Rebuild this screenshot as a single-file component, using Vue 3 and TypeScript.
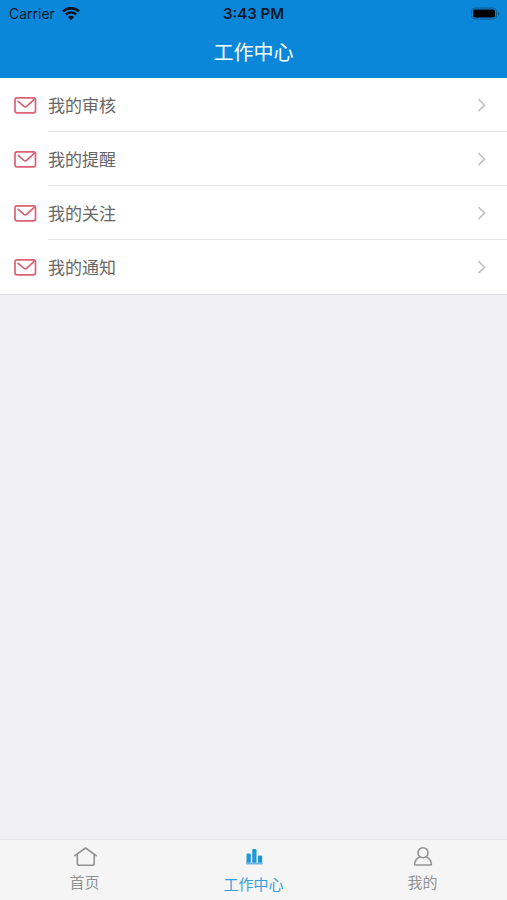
<script setup lang="ts">
import { ref } from 'vue'

interface MenuItem {
  id: string
  label: string
}

interface Tab {
  id: 'home' | 'work' | 'mine'
  label: string
}

const items: MenuItem[] = [
  { id: 'review', label: '我的审核' },
  { id: 'remind', label: '我的提醒' },
  { id: 'follow', label: '我的关注' },
  { id: 'notice', label: '我的通知' },
]

const tabs: Tab[] = [
  { id: 'home', label: '首页' },
  { id: 'work', label: '工作中心' },
  { id: 'mine', label: '我的' },
]

const active = ref<Tab['id']>('work')
</script>

<template>
  <div class="page">
    <header class="header">
      <div class="status">
        <div class="carrier">
          <span>Carrier</span>
          <svg class="wifi" viewBox="0 0 18 14" width="18" height="14" aria-hidden="true">
            <path d="M1 4.400C5.600 .1 12.400 .1 17 4.400" />
            <path d="M3.900 7.500C6.900 4.700 11.100 4.700 14.100 7.500" />
            <path class="dot" d="M9 13.200 5.900 10C7.700 8.400 10.300 8.400 12.100 10Z" />
          </svg>
        </div>
        <span class="time">3:43 PM</span>
        <svg class="battery" viewBox="0 0 30 14" width="30" height="14" aria-hidden="true">
          <rect class="shell" x="1.500" y="1" width="25" height="11" rx="3.500" />
          <rect x="3" y="2.500" width="22" height="8" rx="2" />
          <path class="cap" d="M28 4.500C29.700 5 29.700 8 28 8.500Z" />
        </svg>
      </div>
      <h1 class="title">工作中心</h1>
    </header>

    <main class="content">
      <ul class="list">
        <li v-for="item in items" :key="item.id">
          <button type="button" class="row">
            <svg class="mail" viewBox="0 0 24 18" width="24" height="18" aria-hidden="true">
              <rect x="2" y="1.800" width="20.500" height="15" rx="2" />
              <path d="M5.200 5.400 11 10.400Q12.300 11.400 13.600 10.400L21.700 2.800" />
            </svg>
            <span class="cell">
              <span>{{ item.label }}</span>
              <svg class="chevron" viewBox="0 0 10 14" width="10" height="14" aria-hidden="true">
                <path d="M1.500 1.200 7.500 7.200 1.500 13.200" />
              </svg>
            </span>
          </button>
        </li>
      </ul>
    </main>

    <nav class="tabs">
      <button
        v-for="tab in tabs"
        :key="tab.id"
        type="button"
        class="tab"
        :class="{ active: tab.id === active }"
        @click="active = tab.id"
      >
        <svg v-if="tab.id === 'home'" class="icon" viewBox="0 0 24 22" width="24" height="22" aria-hidden="true">
          <path d="M1.800 10.600 12.500 3 23.200 10.600" />
          <path d="M4.300 9.200V18.200Q4.300 20.200 6.300 20.200H19.200Q21.200 20.200 21.200 18.200V9.200" />
        </svg>
        <svg v-else-if="tab.id === 'work'" class="icon solid" viewBox="0 0 24 22" width="24" height="22" aria-hidden="true">
          <rect x="4.500" y="7.500" width="4.300" height="9.500" rx="1.200" />
          <rect x="10.200" y="3" width="4.300" height="14" rx="1.200" />
          <rect x="15.900" y="9.500" width="4.300" height="7.500" rx="1.200" />
          <rect class="base" x="4" y="16.500" width="16.800" height="2" />
        </svg>
        <svg v-else class="icon" viewBox="0 0 24 22" width="24" height="22" aria-hidden="true">
          <circle cx="12" cy="7.700" r="5" />
          <path d="M8.700 11.900C5.800 13.200 4 15.500 3.600 18.800Q3.500 20 4.600 20H19.400Q20.500 20 20.400 18.800C20 15.500 18.200 13.200 15.300 11.900" />
        </svg>
        <span>{{ tab.label }}</span>
      </button>
    </nav>
  </div>
</template>

<style>
body {
  margin: 0;
}
</style>

<style scoped>
.page {
  display: flex;
  flex-direction: column;
  min-height: 100vh;
  background: #efeff4;
  font-family: "Noto Sans CJK SC", "Liberation Sans", sans-serif;
}

button {
  margin: 0;
  padding: 0;
  border: 0;
  background: none;
  font: inherit;
  cursor: pointer;
}

.header {
  background: #0b87da;
}

.status {
  display: grid;
  grid-template-columns: 1fr auto 1fr;
  align-items: center;
  height: 27px;
  padding: 0 7px;
  color: #06172a;
  font-family: Inter, "Liberation Sans", sans-serif;
  font-size: 14px;
}

.carrier {
  display: flex;
  align-items: center;
  gap: 7px;
  padding-left: 2px;
}

.wifi {
  fill: none;
  stroke: #04101c;
  stroke-width: 2.500;
}

.wifi .dot {
  fill: #04101c;
  stroke: none;
}

.time {
  font-size: 15px;
  font-weight: 600;
}

.battery {
  justify-self: end;
  fill: #000;
}

.battery .shell {
  fill: none;
  stroke: #075a92;
}

.battery .cap {
  fill: #075a92;
}

.title {
  margin: 0;
  height: 51px;
  color: #fff;
  font-size: 20px;
  font-weight: 400;
  line-height: 50px;
  text-align: center;
}

.content {
  flex: 1;
}

.list {
  margin: 0;
  padding: 0;
  border-bottom: 1px solid #e2e2e6;
  background: #fff;
  list-style: none;
}

.row {
  display: flex;
  align-items: center;
  gap: 11px;
  width: 100%;
  padding-left: 13px;
  color: #666;
  font-size: 17px;
  text-align: left;
}

.mail {
  fill: none;
  stroke: #dc6277;
  stroke-width: 1.700;
  stroke-linejoin: round;
  stroke-linecap: round;
}

.cell {
  display: flex;
  flex: 1;
  align-items: center;
  justify-content: space-between;
  height: 53px;
  padding-right: 20px;
  border-bottom: 1px solid #e4e4e6;
}

.list li:last-child .cell {
  border-bottom-color: #fff;
}

.chevron {
  fill: none;
  stroke: #c4c4c8;
  stroke-width: 1.700;
}

.tabs {
  display: grid;
  grid-template-columns: repeat(3, 1fr);
  height: 60px;
  border-top: 1px solid #e3e3e8;
  background: #f5f5f5;
}

.tab {
  display: flex;
  flex-direction: column;
  align-items: center;
  padding-top: 5px;
  gap: 4px;
  color: #929292;
  font-size: 15px;
  line-height: 22px;
}

.tab.active {
  gap: 5px;
  padding-top: 6px;
  color: #3a9ddb;
}

.icon {
  fill: none;
  stroke: #929292;
  stroke-width: 1.600;
  stroke-linecap: round;
  stroke-linejoin: round;
}

.icon.solid {
  fill: #2196d9;
  stroke: none;
}

.icon .base {
  fill: #6bb8e6;
}
</style>
